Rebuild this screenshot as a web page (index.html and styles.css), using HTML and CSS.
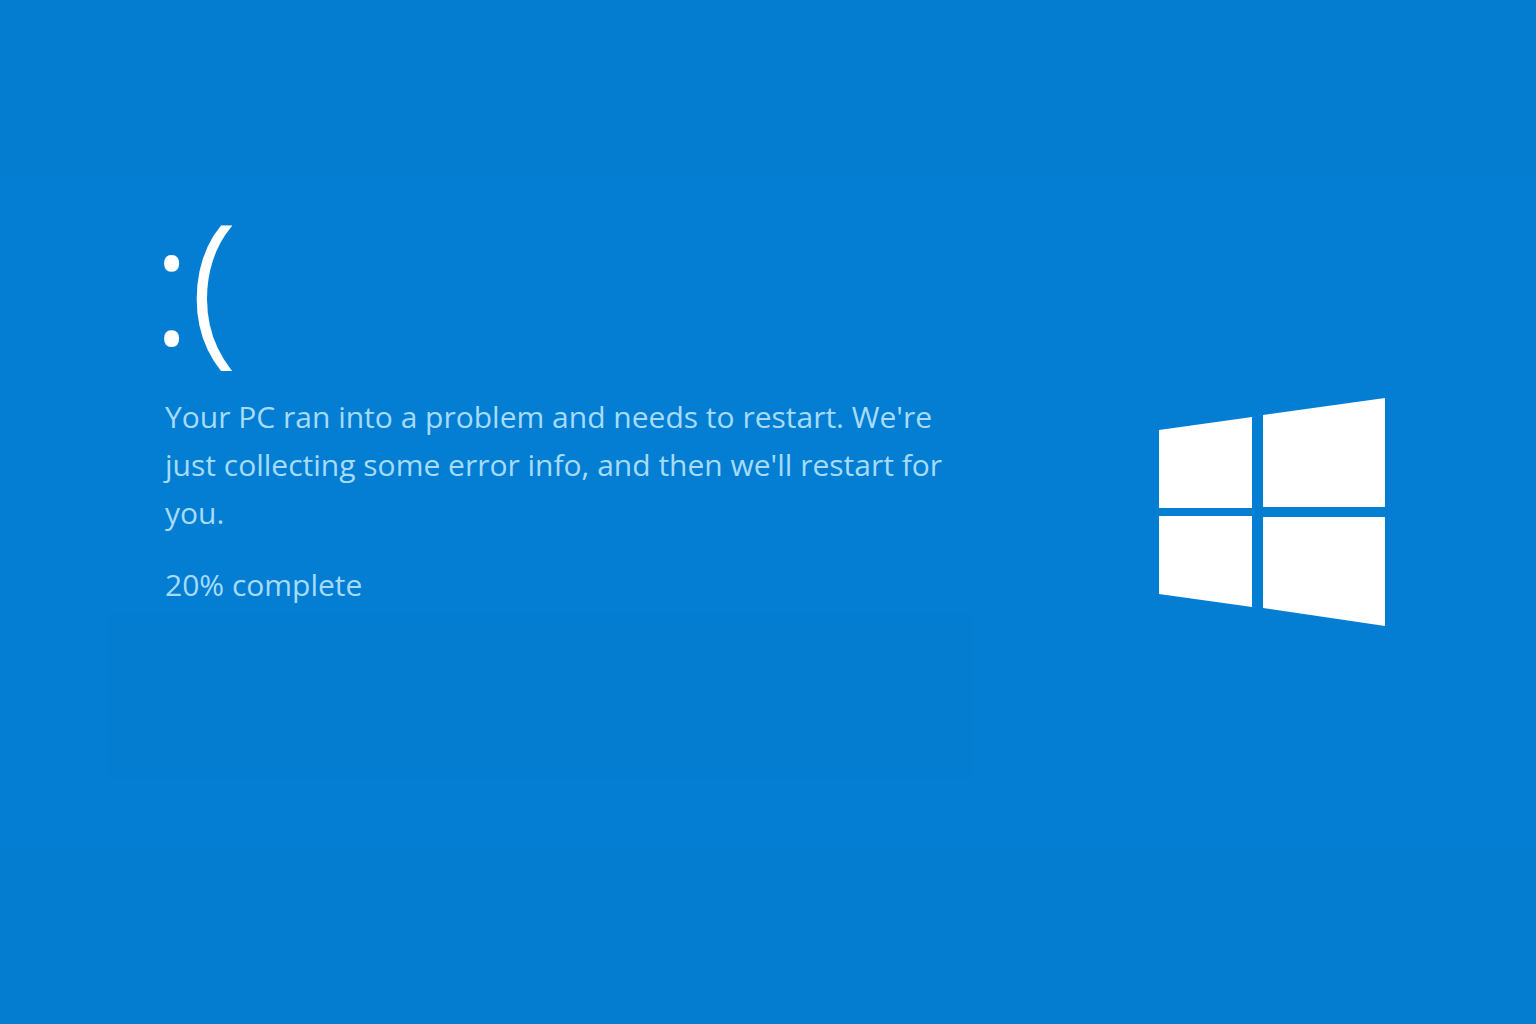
FILE: index.html
```
<!DOCTYPE html>
<html lang="en">

<head>
    <meta charset="UTF-8">
    <meta name="viewport" content="width=device-width, initial-scale=1.0">
    <title>:(</title>
    <link rel="stylesheet" href="styles.css">
</head>

<body>
    <main class="screen">
        <section class="message">
            <h1 class="face">:(</h1>
            <div class="text">
                <p>Your PC ran into a problem and needs to restart. We're just collecting some error info, and then we'll restart for you.</p>
                <p>20% complete</p>
            </div>
            <div class="details"></div>
        </section>

        <svg class="logo" viewBox="0 0 226 228" role="img" aria-label="Windows">
            <path d="M0 32 93 19V110H0Z" />
            <path d="M104 17 226 0V109H104Z" />
            <path d="M0 118H93V209L0 196Z" />
            <path d="M104 119H226V228L104 210Z" />
        </svg>
    </main>
</body>

</html>
```

FILE: styles.css
```
body {
    margin: 0;
    color: #fff;
    font-family: "Open Sans", "Noto Sans", sans-serif;
}

.screen {
    display: flex;
    align-items: center;
    justify-content: space-between;
    gap: 40px;
    min-height: 100vh;
    padding: 0 151px 0 108px;
    box-sizing: border-box;
    background: linear-gradient(#047dd1 17%, #047ed3 17%, #047ed3 83%, #047dd1 83%);
}

.message {
    max-width: 866px;
    padding-bottom: 52px;
}

.face {
    margin: 0 0 24px;
    padding-left: 44px;
    font-size: 164px;
    font-weight: 300;
    line-height: 176px;
    -webkit-text-stroke: 2px #fff;
}

.text {
    padding-left: 57px;
    color: #a6dcf8;
    font-size: 30px;
    line-height: 48px;
}

.text p {
    margin: 0 0 24px;
}

.text p:last-child {
    margin-bottom: 4px;
}

.details {
    height: 166px;
    background-color: #047dd1;
}

.logo {
    flex: none;
    width: 226px;
    fill: #fff;
}
```
